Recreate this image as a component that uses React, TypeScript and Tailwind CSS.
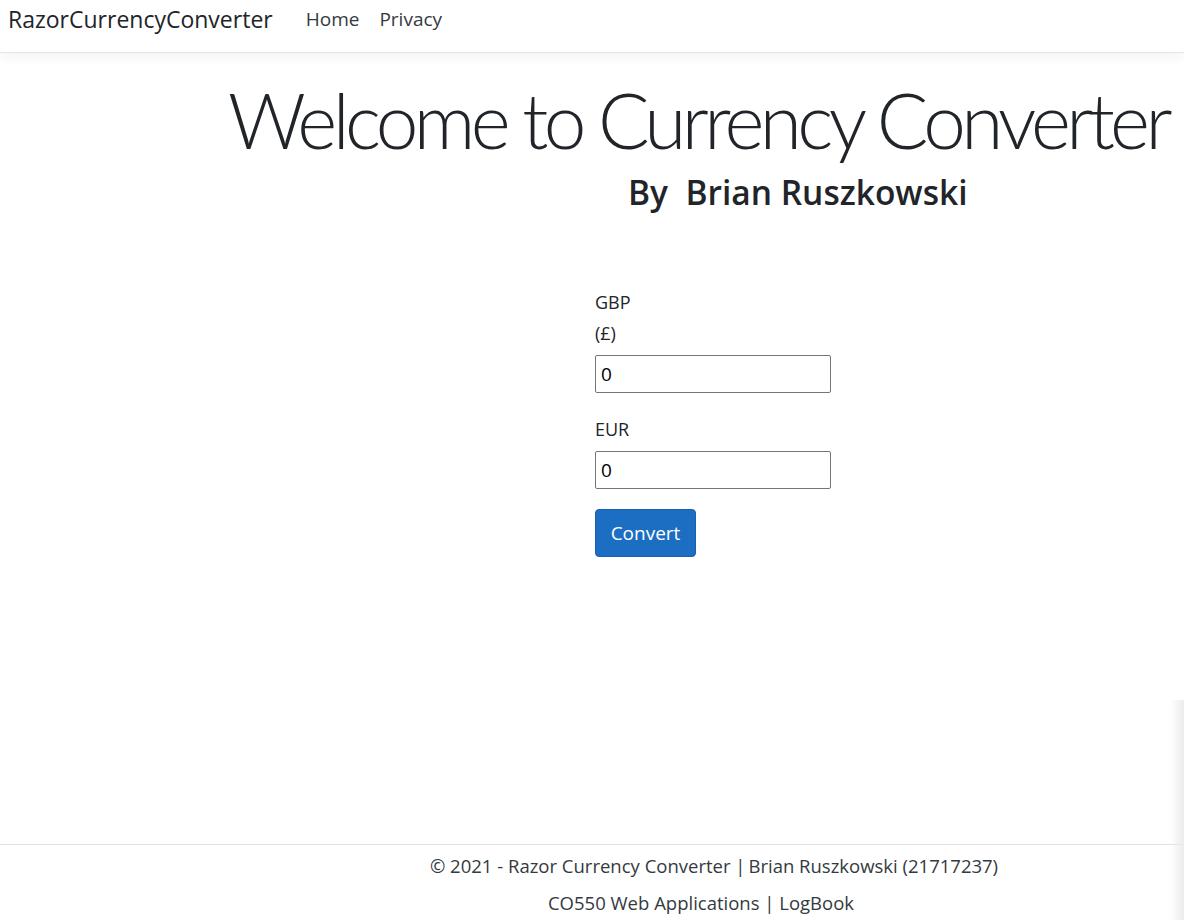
const FONT = { fontFamily: '"Open Sans", "Noto Sans", sans-serif' }
const TITLE_FONT = { fontFamily: 'Lato, "Open Sans", sans-serif' }

function NavBar() {
  return (
    <header className="h-[53px] pb-[14px] bg-white border-b border-[#e5e5e5] shadow-[0_4px_12px_rgba(0,0,0,0.05)] flex items-center">
      <a className="ml-2 text-[23px] text-[#212529] leading-none">RazorCurrencyConverter</a>
      <nav className="flex items-center gap-[20px] ml-[33px]">
        <a className="text-[19px] text-[#343a40]">Home</a>
        <a className="text-[19px] text-[#343a40]">Privacy</a>
      </nav>
    </header>
  )
}

function Field({ label, sub }: { label: string; sub?: string }) {
  return (
    <div className="flex flex-col">
      <label className="text-[18px] leading-[31px] text-[#212529]">{label}</label>
      {sub && <span className="text-[18px] leading-[31px] text-[#212529]">{sub}</span>}
      <input
        defaultValue="0"
        className="mt-[6px] w-[236px] h-[38px] border border-[#767676] rounded-[2px] px-[5px] text-[19px] text-black outline-none"
        style={FONT}
      />
    </div>
  )
}

export default function App() {
  return (
    <div className="relative min-h-[920px] bg-white flex flex-col overflow-hidden" style={FONT}>
      <NavBar />

      <main className="flex-1 flex flex-col">
        {/* Title */}
        <h1
          className="mt-[21px] ml-[228px] text-[76.5px] font-light leading-[90px] text-[#212529] whitespace-nowrap tracking-[-4.6px]"
          style={TITLE_FONT}
        >
          Welcome to Currency Converter
        </h1>
        <h2 className="ml-[628px] mt-[8px] text-[33.5px] font-semibold leading-[40px] text-[#212529] whitespace-nowrap">
          By&nbsp;&nbsp;Brian Ruszkowski
        </h2>

        {/* Form */}
        <form className="ml-[595px] mt-[75px] flex flex-col gap-[20px]">
          <Field label="GBP" sub="(£)" />
          <div className="mt-[1px]">
            <Field label="EUR" />
          </div>
          <button
            type="button"
            className="w-[101px] h-[48px] bg-[#1b6ec2] border border-[#1861ac] rounded-[4px] text-white text-[19px]"
          >
            Convert
          </button>
        </form>
      </main>

      {/* Footer */}
      <footer className="h-[76px] border-t border-[#dee2e6] flex flex-col items-center text-[18.5px] text-[#343a40]">
        <p className="ml-[244px] mt-[6px] leading-[30px] whitespace-nowrap">
          © 2021 - Razor Currency Converter |<span className="ml-[3px]">Brian Ruszkowski (21717237)</span>
        </p>
        <p className="ml-[218px] leading-[44px] whitespace-nowrap">CO550 Web Applications | LogBook</p>
      </footer>

      <div className="absolute right-0 top-[700px] w-[14px] h-[220px] bg-gradient-to-l from-[#ececec] to-transparent" />
    </div>
  )
}
